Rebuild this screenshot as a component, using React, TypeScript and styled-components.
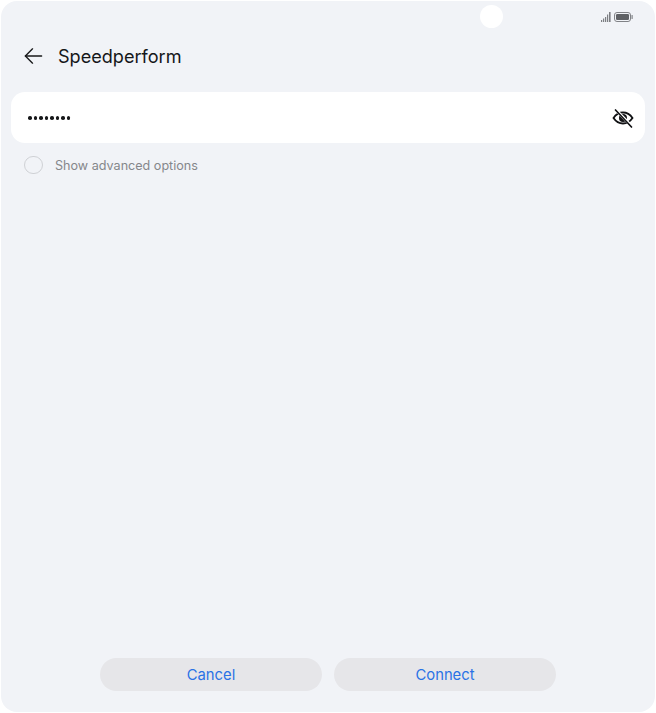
import React from "react";
import styled, { createGlobalStyle } from "styled-components";

const Global = createGlobalStyle`
  html, body { margin: 0; padding: 0; background: #ffffff; }
  body { font-family: Inter, "Noto Sans", "Liberation Sans", sans-serif; }
  * { box-sizing: border-box; }
`;

const Screen = styled.div`
  position: relative;
  width: 654px;
  height: 711px;
  margin: 1px;
  background: #f1f3f7;
  border-radius: 16px;
  display: flex;
  flex-direction: column;
  overflow: hidden;
`;

const PunchHole = styled.div`
  position: absolute;
  left: 479px;
  top: 4px;
  width: 23px;
  height: 23px;
  border-radius: 50%;
  background: #ffffff;
`;

const StatusBar = styled.div`
  height: 31px;
  display: flex;
  align-items: center;
  justify-content: flex-end;
  gap: 3px;
  padding: 0 22px 0 0;
`;

const Header = styled.header`
  height: 48px;
  display: flex;
  align-items: center;
  gap: 14px;
  padding-left: 22px;
`;

const BackButton = styled.button`
  width: 21px;
  height: 22px;
  padding: 0;
  border: 0;
  background: none;
  display: flex;
`;

const Title = styled.h1`
  margin: 0;
  font-size: 18.1px;
  font-weight: 400;
  color: #15171a;
  letter-spacing: 0;
`;

const PasswordField = styled.div`
  margin: 12px 10px 0 10px;
  height: 51px;
  border-radius: 14px;
  background: #ffffff;
  display: flex;
  align-items: center;
  justify-content: space-between;
  padding: 0 11px 0 17px;
`;

const Dots = styled.div`
  display: flex;
  gap: 2px;
  padding-top: 1px;
`;

const Dot = styled.span`
  width: 3.5px;
  height: 3.5px;
  border-radius: 50%;
  background: #17181a;
`;

const EyeButton = styled.button`
  width: 22px;
  height: 22px;
  padding: 0;
  border: 0;
  background: none;
  display: flex;
`;

const OptionRow = styled.label`
  margin: 12px 0 0 23px;
  height: 20px;
  display: flex;
  align-items: center;
  gap: 12.5px;
`;

const Radio = styled.span`
  width: 18.5px;
  height: 18.5px;
  border-radius: 50%;
  border: 1px solid #cfd1d5;
`;

const OptionText = styled.span`
  font-size: 12.6px;
  color: #85878b;
`;

const Spacer = styled.div`
  flex: 1;
`;

const Footer = styled.footer`
  display: flex;
  justify-content: center;
  gap: 12px;
  padding: 0 0 21px 0;
`;

const ActionButton = styled.button`
  width: 222px;
  height: 33px;
  border: 0;
  border-radius: 17px;
  background: #e6e6e9;
  color: #2a72e5;
  font-family: inherit;
  font-size: 14.8px;
  font-weight: 400;
  padding: 0;
`;

const SignalIcon = () => (
  <svg width="10" height="10" viewBox="0 0 10 10" fill="#7d7f83">
    <rect x="0" y="8" width="1.2" height="2" />
    <rect x="2" y="6.5" width="1.2" height="3.5" />
    <rect x="4" y="5" width="1.2" height="5" />
    <rect x="6" y="2.5" width="1.2" height="7.5" />
    <rect x="8" y="0" width="1.6" height="10" />
  </svg>
);

const BatteryIcon = () => (
  <svg width="19" height="10" viewBox="0 0 19 10" fill="none">
    <rect x="0.5" y="0.5" width="16" height="9" rx="2.5" stroke="#808286" />
    <rect x="2" y="2" width="13" height="6" rx="1.2" fill="#5f6165" />
    <rect x="17.5" y="3" width="1.2" height="4" rx="0.6" fill="#808286" />
  </svg>
);

const BackIcon = () => (
  <svg width="22" height="22" viewBox="0 0 22 22" fill="none" stroke="#17181a" strokeWidth="1.4" strokeLinecap="round" strokeLinejoin="round">
    <path d="M2.5 11H19.5" />
    <path d="M10 3.5L2.5 11L10 18.5" />
  </svg>
);

const EyeOffIcon = () => (
  <svg width="22" height="22" viewBox="0 0 22 22" fill="none" stroke="#111214" strokeWidth="1.8" strokeLinecap="round">
    <path d="M1.5 11C4 7.3 7.2 5.5 11 5.5C14.8 5.5 18 7.3 20.5 11C18 14.7 14.8 16.5 11 16.5C7.2 16.5 4 14.7 1.5 11Z" />
    <circle cx="11" cy="11" r="4" fill="#111214" stroke="none" />
    <path d="M4.5 3.5L20 19.5" stroke="#ffffff" strokeWidth="3" />
    <path d="M3.5 3L19.5 20" strokeWidth="1.7" />
  </svg>
);

export default function App() {
  return (
    <>
      <Global />
      <Screen>
        <PunchHole />
        <StatusBar>
          <SignalIcon />
          <BatteryIcon />
        </StatusBar>
        <Header>
          <BackButton aria-label="Back">
            <BackIcon />
          </BackButton>
          <Title>Speedperform</Title>
        </Header>
        <PasswordField>
          <Dots>
            {Array.from({ length: 8 }).map((_, i) => (
              <Dot key={i} />
            ))}
          </Dots>
          <EyeButton aria-label="Show password">
            <EyeOffIcon />
          </EyeButton>
        </PasswordField>
        <OptionRow>
          <Radio />
          <OptionText>Show advanced options</OptionText>
        </OptionRow>
        <Spacer />
        <Footer>
          <ActionButton>Cancel</ActionButton>
          <ActionButton>Connect</ActionButton>
        </Footer>
      </Screen>
    </>
  );
}
